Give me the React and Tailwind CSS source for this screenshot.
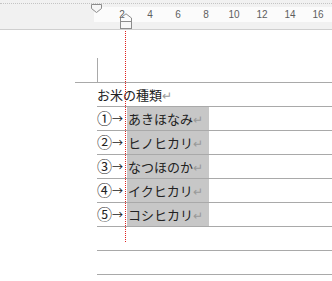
import React from 'react';

const rows = [
  { num: '①', text: 'あきほなみ' },
  { num: '②', text: 'ヒノヒカリ' },
  { num: '③', text: 'なつほのか' },
  { num: '④', text: 'イクヒカリ' },
  { num: '⑤', text: 'コシヒカリ' },
];

const nums = [2, 4, 6, 8, 10, 12, 14, 16];

function Ruler() {
  return (
    <div className="relative h-[30px] bg-[#f1f1f1] border-b border-[#cfcfcf]">
      <div className="h-[4px] border-b border-dotted border-[#c4c4c4]" />
      <div className="h-[3px]" />
      <div className="flex h-[15px]">
        <div className="w-[97px]" />
        <div className="flex flex-1 items-center bg-[#fbfbfb] pl-[14px]">
          {nums.map((n) => (
            <span
              key={n}
              className="w-[28px] text-center text-[10px] leading-none text-[#5e5e5e]"
              style={{ fontFamily: '"Liberation Sans", Arial, sans-serif' }}
            >
              {n}
            </span>
          ))}
        </div>
      </div>

      {/* first line indent */}
      <svg className="absolute left-[90px] top-[4px]" width="13" height="10" viewBox="0 0 13 10">
        <path d="M1.5 0.5 H11.5 V4.5 L6.5 8.5 L1.5 4.5 Z" fill="#f6f6f6" stroke="#8c8c8c" strokeWidth="1" />
      </svg>
      {/* hanging indent + left indent */}
      <svg className="absolute left-[119px] top-[13px]" width="14" height="17" viewBox="0 0 14 17">
        <path d="M1.5 8.5 V5 L7 0.8 L12.5 5 V8.5 Z" fill="none" stroke="#8c8c8c" strokeWidth="1" />
        <rect x="1.5" y="8.5" width="11" height="7" fill="#f6f6f6" stroke="#8c8c8c" strokeWidth="1" />
      </svg>
    </div>
  );
}

export default function App() {
  const font = { fontFamily: '"Noto Sans CJK JP", "Noto Sans", sans-serif' };
  return (
    <div className="relative w-[332px] h-[281px] bg-white overflow-hidden" style={font}>
      <Ruler />

      <div className="h-[28px]" />
      <div className="pl-[97px] h-[24px]">
        <div className="w-px h-full bg-[#a9a9a9]" />
      </div>
      <div className="ml-[75px] h-px bg-[#a9a9a9]" />

      <div className="ml-[97px]">
        <div className="flex items-center h-[24px] border-b border-[#a9a9a9] text-[13px] text-[#222]">
          <span>お米の種類</span>
          <span className="text-[#999] text-[12px]">↵</span>
        </div>
        {rows.map((r) => (
          <div key={r.num} className="flex items-stretch h-[24px] border-b border-[#a9a9a9] text-[13px] text-[#222]">
            <span className="w-[15px] flex items-center text-[15px]">{r.num}</span>
            <span className="w-[15px] flex items-center text-[11px]">→</span>
            <span className="w-[82px] flex items-center bg-[#c7c7c7] pl-[1px]">
              {r.text}
              <span className="text-[#999] text-[12px]">↵</span>
            </span>
          </div>
        ))}
        <div className="h-[24px] border-b border-[#a9a9a9]" />
        <div className="h-[24px] border-b border-[#a9a9a9]" />
      </div>

      {/* tab position guide */}
      <div className="absolute left-[125px] top-[31px] h-[211px] border-l border-dotted border-[#e0201e]" />
    </div>
  );
}
